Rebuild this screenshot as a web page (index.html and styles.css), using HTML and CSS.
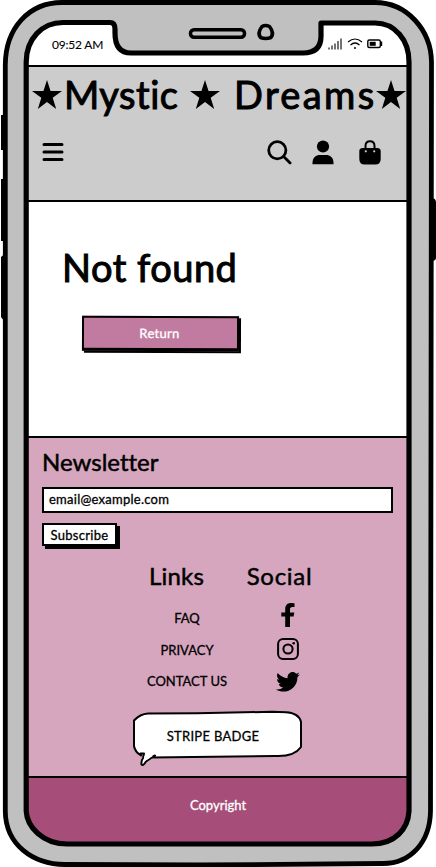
FILE: index.html
```html
<!DOCTYPE html>
<html lang="en">
<head>
<meta charset="utf-8">
<title>Mystic Dreams</title>
<link rel="stylesheet" href="styles.css">
</head>
<body>
<div class="phone">
  <div class="screen">
    <div class="status">
      <span class="time">09:52 AM</span>
      <svg class="signals" width="56" height="14" viewBox="0 0 56 14" fill="none" stroke="#000">
        <path d="M1 12.500v-2M4 12.500v-4M7 12.500v-6M10 12.500V4M13 12.500V1.500" stroke-width="1.100"/>
        <path d="M20 5q7-6 14 0M22.500 8q4.500-4 9 0" stroke-width="1.200"/>
        <circle cx="27" cy="11" r="1" fill="#000" stroke="none"/>
        <rect x="39.800" y="3" width="12.500" height="7.500" rx="1.500" stroke-width="1.400"/>
        <rect x="41.700" y="4.800" width="6" height="4" fill="#000" stroke="none"/>
        <path d="M53.500 4.500v4.500" stroke-width="1.400"/>
      </svg>
    </div>
    <header class="header">
      <h1 class="brand">
        <svg class="star" viewBox="0 0 28 27"><path d="M14 0l3.300 10.300H28l-8.700 6.300L22.600 27 14 20.600 5.400 27l3.300-10.400L0 10.300h10.700z"/></svg>
        <span class="mystic">Mystic</span>
        <svg class="star star-mid" viewBox="0 0 28 27"><path d="M14 0l3.300 10.300H28l-8.700 6.300L22.600 27 14 20.600 5.400 27l3.300-10.400L0 10.300h10.700z"/></svg>
        <span class="dreams">Dreams</span>
        <svg class="star star-end" viewBox="0 0 28 27"><path d="M14 0l3.300 10.300H28l-8.700 6.300L22.600 27 14 20.600 5.400 27l3.300-10.400L0 10.300h10.700z"/></svg>
      </h1>
      <nav class="toolbar">
        <svg width="22" height="20" viewBox="0 0 22 20" stroke="#000" stroke-width="3" stroke-linecap="round"><path d="M2 2.500h18M2 10h18M2 17.500h18"/></svg>
        <svg class="search" width="25" height="25" viewBox="0 0 25 25" fill="none" stroke="#000" stroke-width="2.800" stroke-linecap="round"><circle cx="10.300" cy="10.300" r="8.600"/><path d="M16.600 16.600l6.500 6.500"/></svg>
        <svg class="user" width="22" height="25" viewBox="0 0 22 25"><circle cx="11" cy="6.500" r="6.100"/><path d="M.5 24.300v-1.500C.5 17.500 4 15 8 15h6c4 0 7.500 2.500 7.500 7.800v1.500z"/></svg>
        <svg class="bag" width="22" height="25" viewBox="0 0 22 25"><path d="M4 8h14q3.700 0 3.700 3v8q0 5.500-5.500 5.500H5.800Q.3 24.500.3 19v-8Q.3 8 4 8z"/><path d="M6.500 10V6q0-4.700 4.500-4.700T15.500 6v4" fill="none" stroke="#000" stroke-width="2"/><circle cx="6.800" cy="11.300" r="1.100" fill="#ccc"/><circle cx="15.200" cy="11.300" r="1.100" fill="#ccc"/></svg>
      </nav>
    </header>
    <main class="main">
      <h2 class="title"><span>Not found</span></h2>
      <button class="return"><span>Return</span></button>
    </main>
    <footer class="footer">
      <h3 class="newsletter"><span>Newsletter</span></h3>
      <div class="email"><span>email@example.com</span></div>
      <button class="subscribe"><span>Subscribe</span></button>
      <div class="columns">
        <section class="column">
          <h3><span class="links">Links</span></h3>
          <a><span class="faq">FAQ</span></a>
          <a><span class="privacy">PRIVACY</span></a>
          <a><span class="contact">CONTACT US</span></a>
        </section>
        <section class="column social">
          <h3><span class="soc">Social</span></h3>
          <svg class="fb" width="14" height="24" viewBox="0 0 14 24"><path d="M4.200 24V13.500H.3V9.500h3.900V6.300C4.200 2 6.500 0 10 0c1.700 0 3.500.3 3.500.3V4h-2C9.600 4 9 5 9 6.200v3.300h4.300l-.7 4H9V24z"/></svg>
          <svg class="insta" width="22" height="22" viewBox="0 0 22 22" fill="none" stroke="#000" stroke-width="2"><rect x="1.100" y="1.100" width="19.800" height="19.800" rx="5"/><circle cx="11" cy="11" r="4.600"/><circle cx="16.700" cy="5.300" r="1.300" fill="#000" stroke="none"/></svg>
          <svg class="bird" width="24" height="20" viewBox="0 0 24 20"><path d="M23.900 2.400c-.9.400-1.800.7-2.800.8 1-.6 1.700-1.500 2.100-2.700-.9.600-2 1-3.100 1.200A4.900 4.900 0 0 0 11.700 6.200C7.700 6 4 4.100 1.700 1.100.4 3.400 1.100 6.200 3.200 7.700c-.8 0-1.600-.2-2.200-.6 0 2.400 1.700 4.400 3.900 4.900-.7.200-1.500.2-2.200.1.600 2 2.400 3.400 4.600 3.400A9.900 9.900 0 0 1 0 17.500c8.500 5.300 21.500.2 21.500-12.600.9-.7 1.800-1.500 2.400-2.500z"/></svg>
        </section>
      </div>
      <div class="badge">
        <svg class="bubble" width="172" height="58" viewBox="0 0 172 58"><path d="M16 3.500Q8 4 2 10.500V36Q3 42 9 45.500L8.500 43.500H12L11 48Q9 51 9.500 54.500 11 56.500 14 51.500L23 45.500 19 47.500 143 46Q162 47 169 37V12Q167 3 154 2.200L140 1.800 65 3.200z" fill="#fff" stroke="#000" stroke-width="2" stroke-linejoin="round"/><path d="M12.500 46L20 44.500 20.500 46.300 13.500 50.500 11.800 50z" fill="#fff"/></svg>
        <span class="badge-text">STRIPE BADGE</span>
      </div>
    </footer>
    <div class="copyright"><span>Copyright</span></div>
  </div>
  <svg class="frame" width="436" height="867" viewBox="0 0 436 867">
    <path d="M1 115h5v35H1zM1 179h5v62H1zM1 257q3-3 5-2v64q-3 2-5-2zM431 199q5-2 5 4v55q0 3-5 3z"/>
    <path fill="#c0c0c0" fill-rule="evenodd" d="M5.300 65C5.500 28 29 2.500 62 2.500H375C407 2.500 431 30 431.500 62L430.500 811C430 842 411 863.500 383 863.500L200 865 65 864.500C33 864 5.500 845 5.300 811zM26.200 62C26.200 39 42 22.500 63 22.500H110Q115 22.500 115 29V33Q115 53 131 53H303Q321 53 321 36V23H375C395 23 409 40 409 62V811C408 829 395 844 372 844H67C43 844 27 827 26.200 811z"/>
    <g fill="none" stroke="#000" stroke-linejoin="round">
      <path stroke-width="4.800" d="M5.300 65C5.500 28 29 2.500 62 2.500H375C407 2.500 431 30 431.500 62L430.500 811C430 842 411 863.500 383 863.500L200 865 65 864.500C33 864 5.500 845 5.300 811z"/>
      <path stroke-width="5.200" d="M26.200 62C26.200 39 42 22.500 63 22.500H110Q115 22.500 115 29V33Q115 53 131 53H303Q321 53 321 36V23H375C395 23 409 40 409 62V811C408 829 395 844 372 844H67C43 844 27 827 26.200 811z"/>
      <rect x="190.500" y="29.800" width="54" height="7.500" rx="3.500" stroke-width="3.500"/>
      <path d="M262 26.500Q265.500 24.500 269.500 26.500 274.500 33 271 37.500 265.500 39.500 260.500 37.500 257 33 262 26.500z" stroke-width="3.600"/>
    </g>
  </svg>
</div>
</body>
</html>
```
FILE: styles.css
```css
* { box-sizing: border-box; }
body { margin: 0; background: #fff; color: #000; font-family: Lato, "Liberation Sans", sans-serif; font-size: 13px; font-variant-ligatures: none; }
h1, h2, h3 { margin: 0; font-weight: 400; white-space: nowrap; }
button { margin: 0; padding: 0; font: inherit; border-radius: 0; }
svg { display: block; flex: none; }
span { white-space: nowrap; -webkit-text-stroke: 0.3px currentColor; }

.phone { position: relative; width: 436px; height: 867px; padding: 24px 28px 23px; overflow: hidden; }
.frame { position: absolute; inset: 0; }
.screen { display: grid; grid-template-rows: 43px 135px 236px 340px 66px; width: 380px; height: 820px; border-radius: 34px; overflow: hidden; }

.status { display: flex; align-items: flex-start; justify-content: space-between; padding: 13px 24px 0 24px; border-bottom: 2px solid #000; }
.time { font-size: 12px; line-height: 15px; letter-spacing: -0.2px; -webkit-text-stroke-width: 0.1px; }

.header { background: #ccc; border-bottom: 2px solid #000; }
.brand { display: flex; align-items: center; height: 56px; padding-left: 4px; font-size: 38px; line-height: 56px; }
.brand span, .title span { -webkit-text-stroke-width: 1px; }
.brand span { height: 58px; }
.star { width: 30px; height: 29px; margin-top: -2px; }
.mystic { width: 112px; margin-left: 2px; letter-spacing: 0.5px; }
.star-mid { margin-left: 14px; }
.dreams { width: 141px; margin-left: 14px; letter-spacing: 2.4px; }
.star-end { margin-left: 1px; }
.toolbar { display: flex; align-items: center; height: 58px; padding-left: 14px; }
.search { margin-left: 203px; }
.user { margin-left: 20px; }
.bag { margin-left: 25px; }

.main { background: #fff; border-bottom: 2px solid #000; padding: 41px 0 0 34px; }
.title { font-size: 38px; line-height: 48px; letter-spacing: 0.5px; }
.return { display: block; width: 157px; height: 35px; margin: 25px 0 0 20px; background: #c27ba0; color: #fff; border: 2px solid #000; border-bottom-width: 3px; box-shadow: 2px 2px 0 #000; transform: rotate(0.2deg); letter-spacing: 0.3px; padding-right: 2px; }

.footer { background: #d5a6bd; border-bottom: 2px solid #000; padding: 9px 15px 0 14px; }
.newsletter { font-size: 24px; line-height: 30px; }
.newsletter span, .column h3 span { -webkit-text-stroke-width: 0.5px; }
.email { width: 351px; height: 26px; margin-top: 10px; padding-left: 5px; background: #fff; border: 2px solid #000; line-height: 20px; letter-spacing: 0.25px; }
.subscribe { display: block; width: 75px; height: 23px; margin-top: 10px; background: #fff; color: #000; border: 2px solid #000; box-shadow: 3px 3px 0 #000; line-height: 18px; letter-spacing: 0.3px; }
.columns { display: flex; margin-left: 95px; padding-top: 15px; height: 164px; }
.column { display: flex; flex-direction: column; align-items: center; width: 100px; }
.column h3 { font-size: 24px; line-height: 30px; height: 42px; }
.column a { height: 31.5px; line-height: 30px; }
.social { margin-left: -7px; }
.links { margin-left: -21px; letter-spacing: 0.2px; }
.soc { margin-left: -1px; letter-spacing: 0.7px; }
.fb { margin-left: 16px; }
.insta { margin: 11px 0 12px 16px; }
.bird { margin-left: 16px; }
.badge { position: relative; display: flex; align-items: center; justify-content: center; width: 172px; height: 52px; margin: 0 0 0 90px; }
.bubble { position: absolute; left: 0; top: 0; }
.badge-text { position: relative; left: -5px; letter-spacing: 0.3px; }

.copyright { background: #a64d79; color: #fff; text-align: center; line-height: 54px; }
```
